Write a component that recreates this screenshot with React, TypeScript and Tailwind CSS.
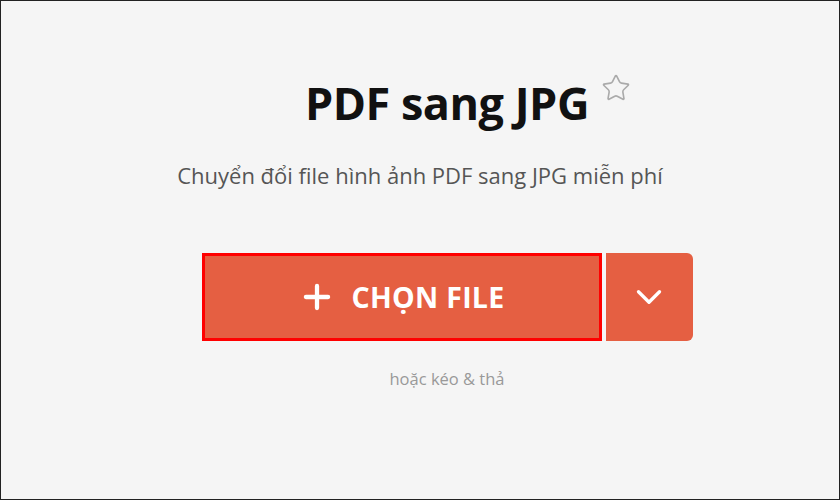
import { ChevronDown, Plus, Star } from 'lucide-react'

export default function App() {
  return (
    <div className="h-[500px] w-[840px] border border-[#222] bg-[#f5f5f5] font-['Open_Sans',sans-serif]">
      <div className="flex flex-col items-center pt-[72px]">
        <div className="relative ml-[54px] flex">
          <h1 className="text-[45px] font-bold leading-[60px] tracking-[-0.5px] text-[#111]">PDF sang JPG</h1>
          <Star className="absolute -right-[42px] top-0 h-[30px] w-[30px] text-[#aaa]" strokeWidth={1.3} />
        </div>
        <p className="mt-[27px] text-[22px] leading-[30px] text-[#555]">
          Chuyển đổi file hình ảnh PDF sang JPG miễn phí
        </p>
        <div className="ml-[54px] mt-[63px] flex gap-[4px]">
          <button className="relative flex h-[88px] w-[400px] items-center justify-center gap-[15px] rounded-l-[6px] bg-[#e55f42]">
            <span className="absolute inset-0 border-[3px] border-[#f00]" />
            <Plus className="h-[38px] w-[38px] text-white" strokeWidth={2.7} />
            <span className="text-[28.5px] font-bold tracking-[0.3px] text-white">CHỌN FILE</span>
          </button>
          <button className="flex h-[88px] w-[87px] items-center justify-center rounded-r-[6px] bg-[#e55f42]">
            <ChevronDown className="h-[42px] w-[42px] text-white" strokeWidth={1.9} />
          </button>
        </div>
        <p className="ml-[54px] mt-[26px] text-[16.5px] text-[#999]">hoặc kéo &amp; thả</p>
      </div>
    </div>
  )
}
